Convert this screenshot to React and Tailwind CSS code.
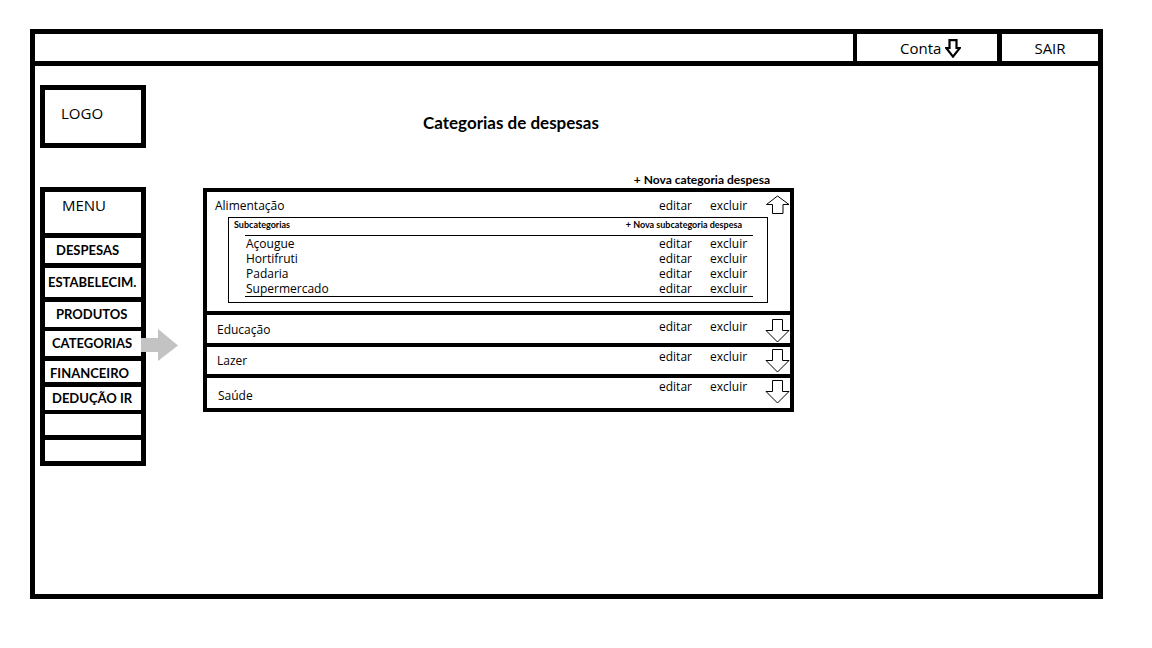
import React from 'react';

const sans = { fontFamily: "'Open Sans', 'DejaVu Sans', sans-serif" };
const bold = { fontFamily: "Lato, 'Liberation Sans', sans-serif" };

function DownArrow() {
  return (
    <svg width="25" height="24" viewBox="0 0 25 24" className="block">
      <polygon points="7.5,0.5 17.5,0.5 17.5,11.5 24,11.5 12.5,23 1,11.5 7.5,11.5" fill="white" stroke="black" strokeWidth="1" />
    </svg>
  );
}

function UpArrow() {
  return (
    <svg width="25" height="20" viewBox="0 0 25 20" className="block">
      <polygon points="12.5,1 24,9.5 18,9.5 18,18.5 7.5,18.5 7.5,9.5 1.5,9.5" fill="white" stroke="black" strokeWidth="1" />
    </svg>
  );
}

const subs = ['Açougue', 'Hortifruti', 'Padaria', 'Supermercado'];

const cats = [
  { name: 'Educação', row: 'h-[28px]', nameCls: 'pl-[10px] pt-[7px]', actCls: 'pt-[4px]', arrowCls: 'pt-[4px]' },
  { name: 'Lazer', row: 'h-[27px]', nameCls: 'pl-[10px] pt-[6px]', actCls: 'pt-[2px]', arrowCls: 'pt-[2px]' },
  { name: 'Saúde', row: 'h-[30px]', nameCls: 'pl-[11px] pt-[10px]', actCls: 'pt-[1px]', arrowCls: 'pt-[2px]' },
];

export default function App() {
  return (
    <div className="w-[1152px] h-[648px] bg-white text-black overflow-hidden">
      <div className="ml-[30px] mt-[29px] w-[1073px] h-[570px] border-[5px] border-black flex flex-col">
        {/* header */}
        <div className="h-[32px] border-b-[5px] border-black flex shrink-0">
          <div className="w-[818px]" />
          <div className="w-[144px] border-l-4 border-black flex items-center pl-[43px]" style={sans}>
            <span className="text-[15px] leading-[20px]">Conta</span>
            <svg width="16" height="19" viewBox="0 0 16 19" className="block ml-[4px] mt-[1px]">
              <polygon points="4.5,1.2 11.5,1.2 11.5,9 14.8,9 8,17.6 1.2,9 4.5,9" fill="white" stroke="black" strokeWidth="2.2" strokeLinejoin="miter" />
            </svg>
          </div>
          <div className="flex-1 border-l-[5px] border-black flex items-center justify-center" style={sans}>
            <span className="text-[15px] leading-[20px] pt-[1px]">SAIR</span>
          </div>
        </div>

        {/* body */}
        <div className="flex-1 flex">
          {/* sidebar */}
          <div className="ml-[5px] w-[106px] flex flex-col">
            <div className="mt-[19px] h-[63px] border-[5px] border-black pl-[16px] pt-[13px]" style={sans}>
              <span className="text-[15px] leading-[20px] block">LOGO</span>
            </div>
            <div className="mt-[39px] border-[5px] border-black flex flex-col">
              <div className="h-[41px] pl-[17px] pt-[3px]" style={sans}>
                <span className="text-[15px] leading-[20px] block">MENU</span>
              </div>
              <div className="h-[5px] bg-black" />
              <div className="h-[25px] flex items-center pl-[11px] text-[13px] font-bold" style={bold}>DESPESAS</div>
              <div className="h-[5px] bg-black" />
              <div className="h-[29px] flex items-center pl-[3px] text-[13px] font-bold" style={bold}>ESTABELECIM.</div>
              <div className="h-[5px] bg-black" />
              <div className="h-[25px] flex items-center pl-[11px] text-[13px] font-bold" style={bold}>PRODUTOS</div>
              <div className="h-[4px] bg-black" />
              <div className="relative h-[25px] flex items-center pl-[7px] text-[13px] font-bold" style={bold}>
                CATEGORIAS
                <svg width="38" height="33" viewBox="0 0 38 33" className="absolute left-[96px] top-[-2px]">
                  <polygon points="0,9 17,9 17,0 37,16.5 17,32 17,23 0,23" fill="#c3c3c3" />
                </svg>
              </div>
              <div className="h-[5px] bg-black" />
              <div className="h-[21px] flex items-start pt-[4px] pl-[5px] text-[13px] leading-[16px] font-bold" style={bold}>FINANCEIRO</div>
              <div className="h-[5px] bg-black" />
              <div className="h-[23px] flex items-center pl-[7px] text-[13px] font-bold" style={bold}>DEDUÇÃO IR</div>
              <div className="h-[4px] bg-black" />
              <div className="h-[21px]" />
              <div className="h-[5px] bg-black" />
              <div className="h-[21px]" />
            </div>
          </div>

          {/* main */}
          <div className="ml-[57px] w-[591px] flex flex-col">
            <div className="mt-[47px] pl-[220px] text-[17px] leading-[20px] font-bold" style={bold}>Categorias de despesas</div>
            <div className="mt-[39px] pr-[24px] text-right text-[12px] leading-[16px] font-bold" style={bold}>+ Nova categoria despesa</div>

            <div className="border-4 border-black flex flex-col text-[12px]" style={sans}>
              {/* Alimentação */}
              <div className="flex flex-col pb-[8px]">
                <div className="h-[25px] flex items-start">
                  <div className="flex-1 pl-[8px] pt-[6px] leading-[16px]">Alimentação</div>
                  <div className="w-[51px] pt-[6px] leading-[16px]">editar</div>
                  <div className="w-[55px] pt-[6px] leading-[16px]">excluir</div>
                  <div className="w-[25px] pt-[3px]"><UpArrow /></div>
                </div>
                <div className="ml-[21px] mr-[22px] border border-black pb-[5px]">
                  <div className="h-[17px] flex items-start pl-[5px] pr-[25px] text-[9px] leading-[11px] font-bold" style={bold}>
                    <span className="flex-1 pt-[1px]">Subcategorias</span>
                    <span className="pt-[1px]">+ Nova subcategoria despesa</span>
                  </div>
                  <div className="ml-[16px] mr-[14px] border-t border-b border-black">
                    {subs.map((s) => (
                      <div key={s} className="h-[15px] flex items-center leading-[15px]">
                        <div className="flex-1 pl-[1px]">{s}</div>
                        <div className="w-[51px]">editar</div>
                        <div className="w-[43px]">excluir</div>
                      </div>
                    ))}
                  </div>
                </div>
              </div>

              {cats.map((c) => (
                <React.Fragment key={c.name}>
                  <div className="h-[4px] bg-black" />
                  <div className={`flex items-start ${c.row}`}>
                    <div className={`flex-1 leading-[16px] ${c.nameCls}`}>{c.name}</div>
                    <div className={`w-[51px] leading-[16px] ${c.actCls}`}>editar</div>
                    <div className={`w-[55px] leading-[16px] ${c.actCls}`}>excluir</div>
                    <div className={`w-[25px] ${c.arrowCls}`}><DownArrow /></div>
                  </div>
                </React.Fragment>
              ))}
            </div>
          </div>
        </div>
      </div>
    </div>
  );
}
